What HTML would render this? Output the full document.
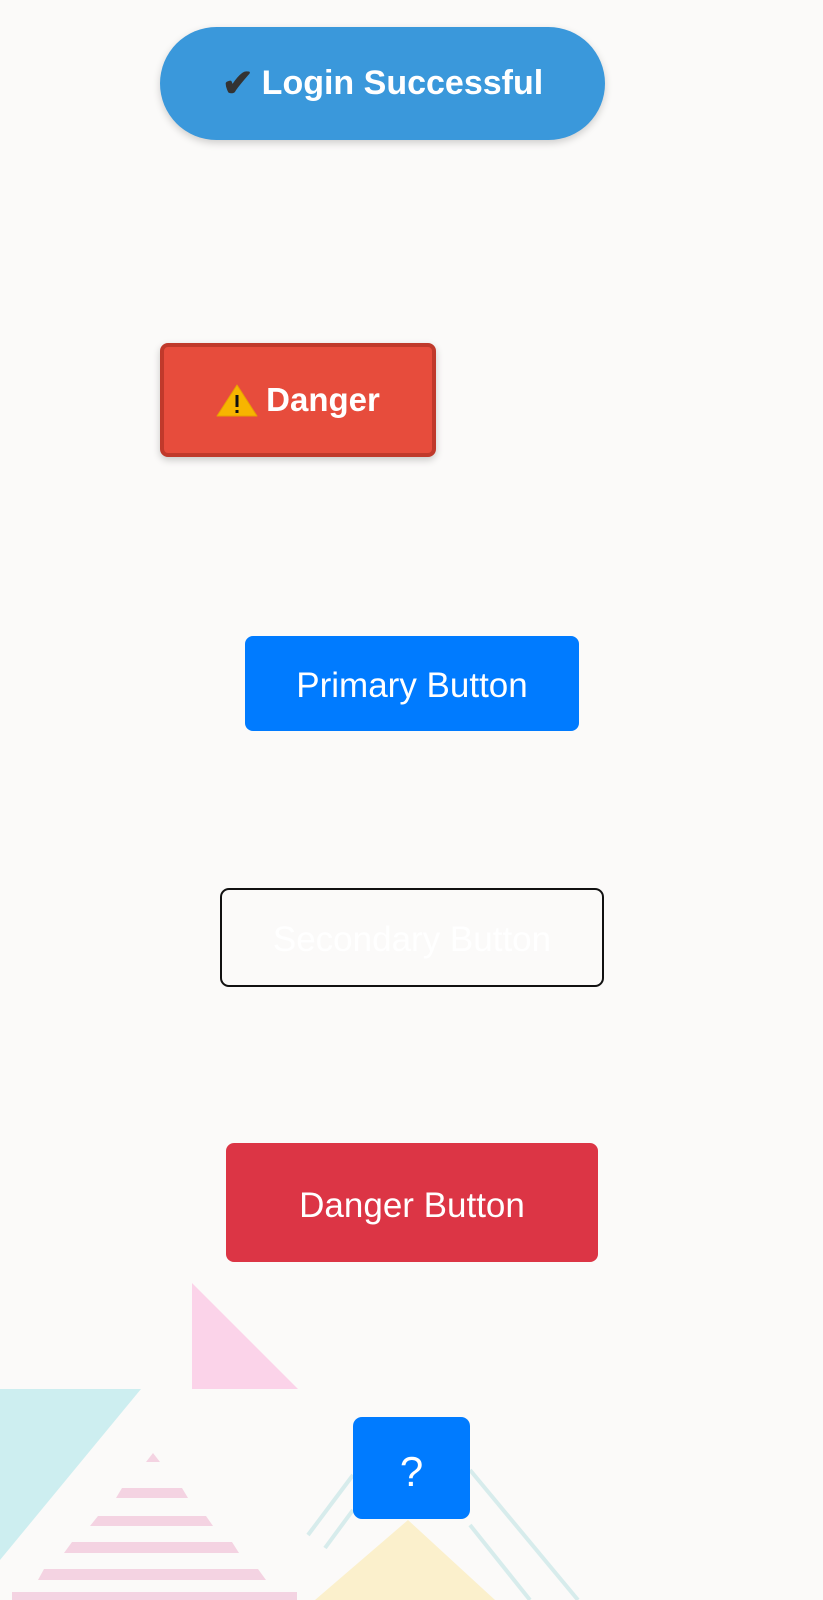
<!DOCTYPE html>
<html><head><meta charset="utf-8"><style>
html,body{margin:0;padding:0}
body{width:823px;height:1600px;background:#fbfaf9;position:relative;overflow:hidden;font-family:"Liberation Sans",sans-serif}
.abs{position:absolute;box-sizing:border-box;display:flex;align-items:center;justify-content:center}
.login{left:160px;top:27px;width:445px;height:113px;border-radius:57px;background:#3a98db;color:#fff;font-weight:bold;font-size:34px;box-shadow:0 3px 8px rgba(0,0,0,.18)}
.danger1{left:160px;top:343px;width:276px;height:114px;border-radius:8px;background:#e74c3c;border:4px solid #c0392b;color:#fff;font-weight:bold;font-size:33px;box-shadow:0 3px 8px rgba(0,0,0,.2)}
.primary{left:245px;top:636px;width:334px;height:95px;border-radius:8px;background:#007bff;color:#fff;font-size:35px;padding-top:4px}
.secondary{left:220px;top:888px;width:384px;height:99px;border-radius:9px;border:2px solid #111;color:#fff;font-size:35px;padding-top:4px}
.danger2{left:226px;top:1143px;width:372px;height:119px;border-radius:8px;background:#dc3545;color:#fff;font-size:35px;padding-top:6px}
.q{left:353px;top:1417px;width:117px;height:102px;border-radius:9px;background:#007bff;color:#fff;font-size:42px;padding-top:8px}
</style></head><body>
<svg width="823" height="1600" style="position:absolute;left:0;top:0">
<polygon points="192,1283 192,1389 298,1389" fill="#fbd3e9"/>
<polygon points="0,1389 141,1389 0,1560" fill="#cdeef0"/>
<g fill="#f4d3e2">
<polygon points="146,1462 160,1462 153,1453"/>
<polygon points="122,1488 182,1488 188,1498 116,1498"/>
<polygon points="98,1516 206,1516 213,1526 90,1526"/>
<polygon points="72,1542 232,1542 239,1553 64,1553"/>
<polygon points="44,1569 258,1569 266,1580 38,1580"/>
<rect x="12" y="1592" width="285" height="8"/>
</g>
<polygon points="408,1520 315,1600 495,1600" fill="#fbf0cc"/>
<g stroke="#d7ecec" stroke-width="4">
<line x1="353" y1="1475" x2="308" y2="1535"/>
<line x1="353" y1="1510" x2="325" y2="1548"/>
<line x1="470" y1="1470" x2="578" y2="1600"/>
<line x1="470" y1="1525" x2="530" y2="1600"/>
</g>
</svg>
<div class="abs login"><span style="color:#333;font-size:38px;margin-right:8px">✔</span>Login Successful</div>
<div class="abs danger1"><svg width="42" height="34" viewBox="0 0 42 34" style="margin-right:8px"><polygon points="21,2 41,33 1,33" fill="#f7b500" stroke="#e8a000" stroke-width="1" stroke-linejoin="round"/><rect x="19.5" y="12" width="3" height="12" fill="#111"/><rect x="19.5" y="27" width="3" height="3" fill="#111"/></svg>Danger</div>
<div class="abs primary">Primary Button</div>
<div class="abs secondary">Secondary Button</div>
<div class="abs danger2">Danger Button</div>
<div class="abs q">?</div>
</body></html>
